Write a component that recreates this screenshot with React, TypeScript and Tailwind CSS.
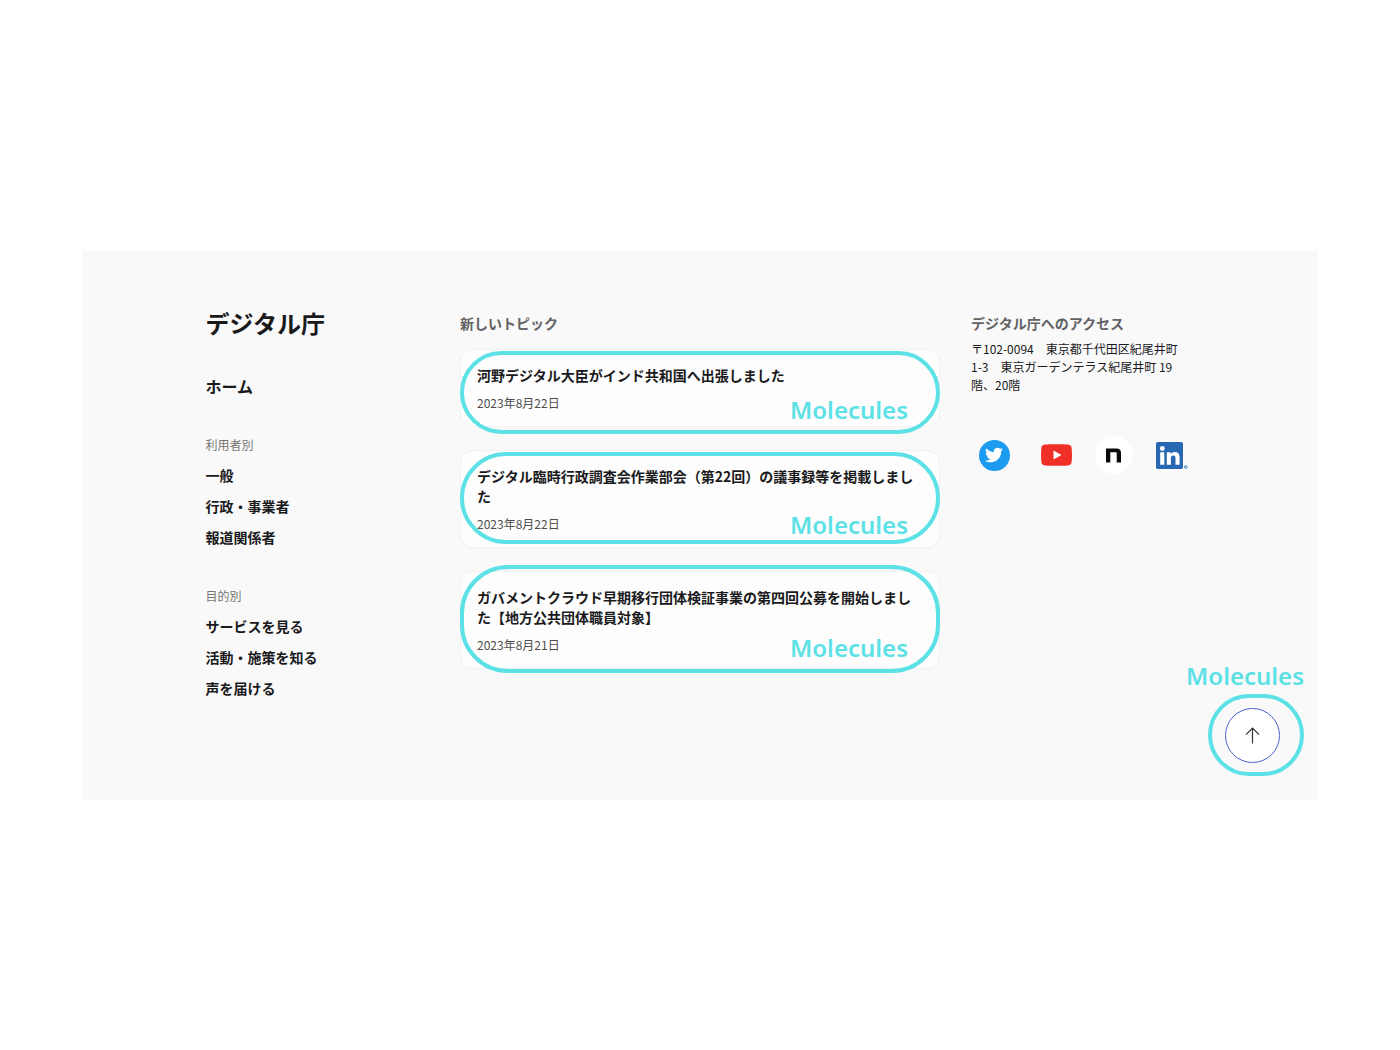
import React from 'react';
import { FaTwitter } from 'react-icons/fa';

type Topic = {
  title: string;
  date: string;
  ring: string;
  label: string;
};

const topics: Topic[] = [
  {
    title: '河野デジタル大臣がインド共和国へ出張しました',
    date: '2023年8月22日',
    ring: 'top-[2px] -bottom-[7px]',
    label: 'bottom-px',
  },
  {
    title: 'デジタル臨時行政調査会作業部会（第22回）の議事録等を掲載しました',
    date: '2023年8月22日',
    ring: 'top-[2px] bottom-1',
    label: 'bottom-[7px]',
  },
  {
    title: 'ガバメントクラウド早期移行団体検証事業の第四回公募を開始しました【地方公共団体職員対象】',
    date: '2023年8月21日',
    ring: '-top-[6px] -bottom-1',
    label: 'bottom-[5px]',
  },
];

const navGroups = [
  { heading: '利用者別', links: ['一般', '行政・事業者', '報道関係者'] },
  { heading: '目的別', links: ['サービスを見る', '活動・施策を知る', '声を届ける'] },
];

function Label({ className }: { className: string }) {
  return (
    <span
      className={`pointer-events-none font-['Noto_Sans',sans-serif] text-2xl leading-8 font-semibold text-[#5ce1e6] ${className}`}
    >
      Molecules
    </span>
  );
}

function SideNav() {
  return (
    <nav aria-label="サイト">
      <p className="text-2xl leading-8 font-bold whitespace-nowrap">デジタル庁</p>
      <a href="#home" className="mt-[35px] block text-base leading-6 font-bold">
        ホーム
      </a>
      {navGroups.map((group) => (
        <section key={group.heading} className="mt-[37px]">
          <h2 className="text-xs leading-5 text-[#767676]">{group.heading}</h2>
          <ul className="mt-2 flex flex-col gap-[7px]">
            {group.links.map((link) => (
              <li key={link}>
                <a href="#nav" className="block text-sm leading-6 font-bold">
                  {link}
                </a>
              </li>
            ))}
          </ul>
        </section>
      ))}
    </nav>
  );
}

function TopicCard({ topic }: { topic: Topic }) {
  return (
    <li className="relative">
      <a href="#topic" className="block rounded-xl border border-[#f1f1f1] bg-[#fdfdfd] px-4 pt-[15px] pb-[14px]">
        <h3 className="text-sm leading-5 font-bold">{topic.title}</h3>
        <time className="mt-[9px] block text-xs leading-[18px] text-[#4d4d4d]">{topic.date}</time>
      </a>
      <span
        aria-hidden="true"
        className={`pointer-events-none absolute inset-x-0 rounded-[48px] border-4 border-[#5ce1e6] ${topic.ring}`}
      />
      <Label className={`absolute right-8 ${topic.label}`} />
    </li>
  );
}

function SocialLinks() {
  return (
    <ul className="mt-[42px] flex items-center gap-[15px]">
      <li className="shrink-0 px-2">
        <a
          href="#twitter"
          aria-label="Twitter"
          className="flex size-[31px] items-center justify-center rounded-full bg-[#1d9bf0] text-white"
        >
          <FaTwitter size={18} />
        </a>
      </li>
      <li className="shrink-0 px-2">
        <a href="#youtube" aria-label="YouTube" className="block">
          <svg width="31" height="22" viewBox="0 0 31 22" className="block">
            <path
              d="M4 .6C9 0 22 0 27 .6c2.500.3 3.400 1.500 3.600 3.400.5 4 .5 10 0 14-.2 1.900-1.100 3.100-3.600 3.400-5 .6-18 .6-23 0C1.500 21.100.6 19.900.4 18c-.5-4-.5-10 0-14C.6 2.100 1.500.9 4 .6z"
              fill="#f03026"
            />
            <path d="M12.500 6.500v9l8-4.500z" fill="#fff" />
          </svg>
        </a>
      </li>
      <li className="shrink-0">
        <a
          href="#note"
          aria-label="note"
          className="flex size-[38px] items-center justify-center rounded-full bg-white"
        >
          <svg width="15" height="15" viewBox="0 0 15 15">
            <path d="M0 .5h10.500C13.500.5 15 2 15 5v9.500h-4.300V5.400c0-.8-.3-1.200-1.100-1.200H4.300v10.300H0z" fill="#0a0a0a" />
          </svg>
        </a>
      </li>
      <li className="shrink-0 pl-2">
        <a href="#linkedin" aria-label="LinkedIn" className="block">
          <svg width="32" height="27" viewBox="0 0 32 27" className="block">
            <rect width="27" height="27" rx="1.800" fill="#2867b2" />
            <circle cx="6.300" cy="6.500" r="2.400" fill="#fff" />
            <path
              d="M4.200 10.300h4.100v12.500H4.200zM10.800 10.300h3.900V12c.6-1.100 2-2.100 4-2.100 4 0 4.900 2.600 4.900 6v6.900h-4.100v-6.100c0-1.500 0-3.300-2.100-3.300s-2.500 1.600-2.500 3.200v6.200h-4.100z"
              fill="#fff"
            />
            <circle cx="29.800" cy="25" r="1.400" fill="none" stroke="#2867b2" strokeWidth=".7" />
            <circle cx="29.800" cy="25" r=".5" fill="#2867b2" />
          </svg>
        </a>
      </li>
    </ul>
  );
}

function BackToTop() {
  return (
    <div className="absolute right-[14px] bottom-6 flex flex-col items-end">
      <Label className="" />
      <div className="mt-[2px] flex h-[82px] w-24 items-center rounded-full border-4 border-[#5ce1e6] pl-[13px]">
        <button
          type="button"
          aria-label="ページの先頭へ戻る"
          className="flex size-[55px] items-center justify-center rounded-full border border-[#4a63cf] bg-white text-[#333333]"
        >
          <svg width="15" height="17" viewBox="0 0 15 17" fill="none" stroke="currentColor" strokeWidth="1.200">
            <path d="M7.500 16.500V1.200M1 7.700l6.500-6.500L14 7.700" />
          </svg>
        </button>
      </div>
    </div>
  );
}

export default function App() {
  return (
    <main className="flex min-h-screen items-center bg-white px-[82px] pt-px font-['Noto_Sans_CJK_JP',sans-serif] text-[#1a1a1c]">
      <footer
        lang="ja"
        className="relative grid w-full grid-cols-[223fr_479fr_223fr] gap-x-[31px] bg-[#f9f9f9] px-[10%] pt-[56px] pb-[100px]"
      >
        <SideNav />
        <section className="pt-[6px]">
          <h2 className="text-sm leading-5 font-bold text-[#626264]">新しいトピック</h2>
          <ul className="mt-4 flex flex-col gap-[23px]">
            {topics.map((topic) => (
              <TopicCard key={topic.title} topic={topic} />
            ))}
          </ul>
        </section>
        <section className="pt-[6px]">
          <h2 className="text-sm leading-5 font-bold text-[#626264]">デジタル庁へのアクセス</h2>
          <address className="mt-[7px] text-xs leading-[18px] not-italic">
            〒102-0094　東京都千代田区紀尾井町
            <br />
            1-3　東京ガーデンテラス紀尾井町 19
            <br />
            階、20階
          </address>
          <SocialLinks />
        </section>
        <BackToTop />
      </footer>
    </main>
  );
}
